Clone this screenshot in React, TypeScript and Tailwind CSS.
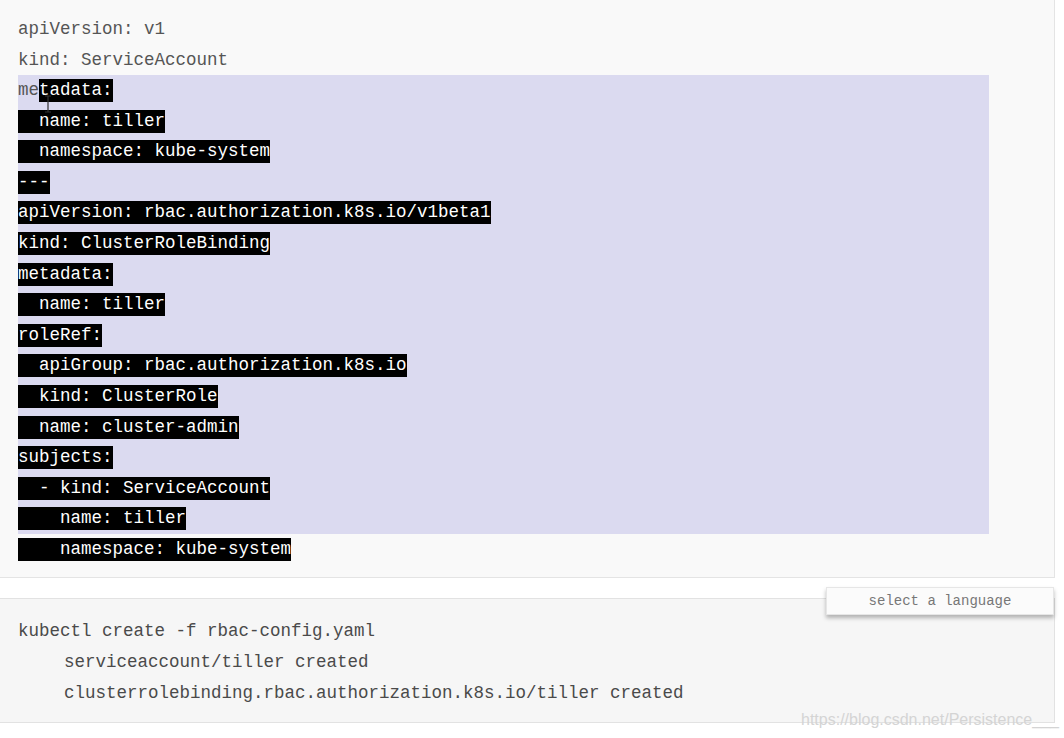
type Line = { pre?: string; sel?: string; plain?: string };

const lines: Line[] = [
  { plain: "apiVersion: v1" },
  { plain: "kind: ServiceAccount" },
  { pre: "me", sel: "tadata:" },
  { sel: "  name: tiller" },
  { sel: "  namespace: kube-system" },
  { sel: "---" },
  { sel: "apiVersion: rbac.authorization.k8s.io/v1beta1" },
  { sel: "kind: ClusterRoleBinding" },
  { sel: "metadata:" },
  { sel: "  name: tiller" },
  { sel: "roleRef:" },
  { sel: "  apiGroup: rbac.authorization.k8s.io" },
  { sel: "  kind: ClusterRole" },
  { sel: "  name: cluster-admin" },
  { sel: "subjects:" },
  { sel: "  - kind: ServiceAccount" },
  { sel: "    name: tiller" },
  { sel: "    namespace: kube-system" },
];

const CodeLine = ({ line }: { line: Line }) => (
  <div className="h-[30.6px] flex items-center whitespace-pre">
    {line.plain && <span>{line.plain}</span>}
    {line.pre && <span>{line.pre}</span>}
    {line.sel && (
      <span className="inline-block h-[23px] leading-[23px] bg-black text-white">{line.sel}</span>
    )}
  </div>
);

const App = () => {
  return (
    <div
      className="relative w-[1064px] h-[738px] bg-white overflow-hidden text-[17.5px] text-[#555]"
      style={{ fontFamily: '"Liberation Mono", "DejaVu Sans Mono", monospace' }}
    >
      {/* yaml block */}
      <div className="relative w-[1055px] h-[578px] bg-[#f9f9f9] border-r border-b border-[#e4e4e4] pt-[14px] pl-[18px]">
        <CodeLine line={lines[0]} />
        <CodeLine line={lines[1]} />
        <div className="w-[971px] bg-[#dbdaf0]">
          {lines.slice(2, 17).map((l, i) => (
            <CodeLine key={i} line={l} />
          ))}
        </div>
        <CodeLine line={lines[17]} />

        {/* text cursor */}
        <svg className="absolute left-[43px] top-[95px]" width="10" height="18" viewBox="0 0 10 18">
          <path d="M2 1h6M5 1v16M2 17h6" stroke="#333" strokeWidth="1.2" fill="none" />
        </svg>
      </div>

      {/* shell block */}
      <div className="relative mt-[20px] w-[1055px] h-[125px] bg-[#f6f6f6] border-t border-r border-b border-[#e2e2e2] pt-[17px] pl-[18px] text-[#4a4a4a]">
        <div className="h-[31px] flex items-center whitespace-pre">kubectl create -f rbac-config.yaml</div>
        <div className="h-[31px] flex items-center whitespace-pre pl-[46px]">serviceaccount/tiller created</div>
        <div className="h-[31px] flex items-center whitespace-pre pl-[46px]">
          clusterrolebinding.rbac.authorization.k8s.io/tiller created
        </div>
      </div>

      {/* language selector */}
      <div className="absolute left-[826px] top-[587px] w-[228px] h-[28px] bg-[#fbfbfb] border border-[#e6e6e6] shadow-[0_3px_4px_rgba(0,0,0,0.28)] flex items-center justify-center text-[14px] text-[#777]">
        select a language
      </div>

      {/* watermark */}
      <div
        className="absolute left-[801px] top-[708px] text-[16px] text-[#d4d4d4] whitespace-pre"
        style={{ fontFamily: '"Liberation Sans", Arial, sans-serif' }}
      >
        https://blog.csdn.net/Persistence___
      </div>
    </div>
  );
};

export default App;
